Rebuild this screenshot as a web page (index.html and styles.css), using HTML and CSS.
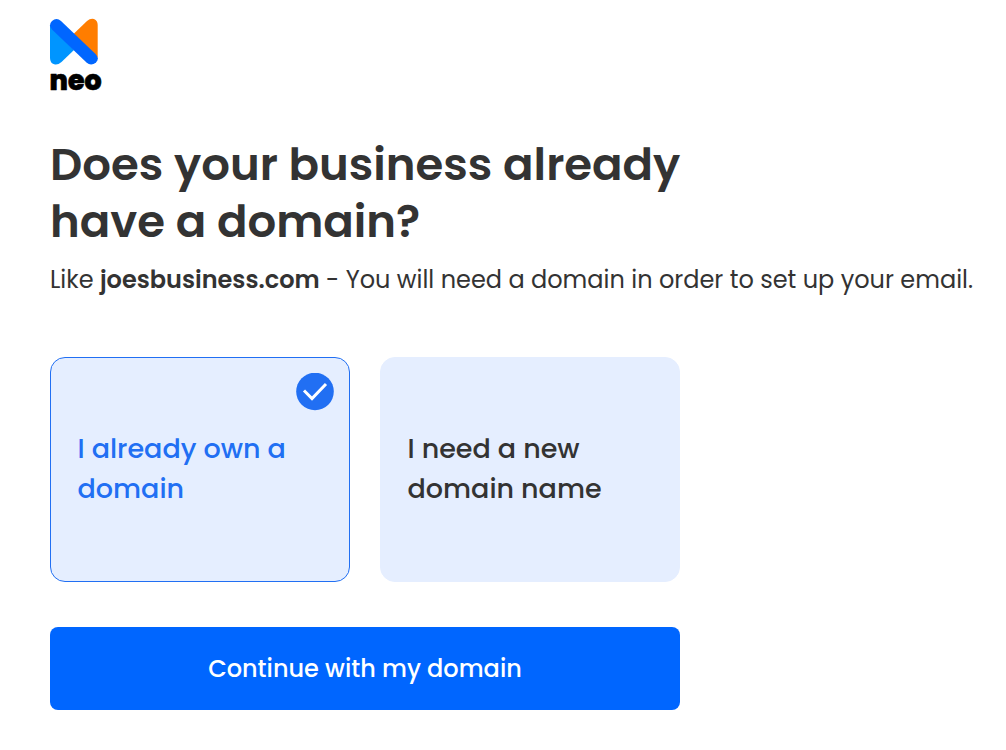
FILE: index.html
```html
<!DOCTYPE html>
<html lang="en">
<head>
    <meta charset="UTF-8">
    <meta name="viewport" content="width=device-width, initial-scale=1.0">
    <title>Neo - Set up your domain</title>
    <link rel="stylesheet" href="styles.css">
</head>
<body>
    <main class="page">
        <header>
            <svg class="logo" width="52" height="74" viewBox="0 0 52 74">
                <path d="M0 7 L24 32 L11.500 44 Q8 47 5 46.500 Q0 45.500 0 40 Z" fill="#0095ff"/>
                <path d="M23.500 16 L37 3 Q40.500 0 44 1 Q47.700 2.500 47.700 7 V40 Z" fill="#ff7d00"/>
                <path d="M2 3 Q6.500 -1 11 3 L45.500 36 Q50 40.500 46 44.500 Q41 48.500 36.500 44.500 L2 11.500 Q-2 7 2 3 Z" fill="#0066ff"/>
                <text class="logo-text" x="-0.500" y="72" textLength="52" lengthAdjust="spacingAndGlyphs">neo</text>
            </svg>
        </header>

        <h1>Does your business already<br>have a domain?</h1>
        <p class="subtitle">Like <strong>joesbusiness.com</strong> - You will need a domain in order to set up your email.</p>

        <div class="options">
            <div class="option selected">
                <svg class="check" width="38" height="38" viewBox="0 0 38 38">
                    <circle cx="19" cy="18.500" r="18.800" fill="#216ff3"/>
                    <path d="M8 17.500 L16 25.500 L30 11" fill="none" stroke="#fff" stroke-width="3"/>
                </svg>
                <span>I already own a<br>domain</span>
            </div>
            <div class="option">
                <span>I need a new<br>domain name</span>
            </div>
        </div>

        <button class="continue">Continue with my domain</button>
    </main>
</body>
</html>
```
FILE: styles.css
```css
:root {
    --neo-blue: #0066ff;
    --select-blue: #216ff3;
    --card-bg: #e5eeff;
    --text: #333333;
}

body {
    font-family: 'Poppins', 'Inter', sans-serif;
    margin: 0;
    background-color: #fff;
    color: var(--text);
}

.page {
    padding: 18px 0 0 50px;
}

header {
    height: 74px;
}

.logo {
    display: block;
    overflow: visible;
}

.logo-text {
    font-size: 28px;
    font-weight: 800;
    stroke: #000;
    stroke-width: 0.7;
    stroke-linejoin: round;
}

h1 {
    margin: 44px 0 0;
    font-size: 45px;
    font-weight: 600;
    line-height: 57px;
}

.subtitle {
    margin: 12px 0 0;
    font-size: 24px;
    font-weight: 400;
    line-height: 36px;
    white-space: nowrap;
}

.subtitle strong {
    font-weight: 600;
}

.options {
    display: flex;
    gap: 30px;
    margin-top: 59px;
}

.option {
    position: relative;
    box-sizing: border-box;
    width: 300px;
    height: 225px;
    padding: 71px 26.5px 0;
    border: 1px solid var(--card-bg);
    border-radius: 15px;
    background-color: var(--card-bg);
    font-size: 27px;
    font-weight: 500;
    line-height: 40px;
    white-space: nowrap;
}

.option.selected {
    border-color: var(--select-blue);
    color: var(--select-blue);
}

.check {
    position: absolute;
    top: 15px;
    right: 15px;
}

.continue {
    display: block;
    width: 630px;
    height: 83px;
    margin-top: 45px;
    border: none;
    border-radius: 8px;
    background-color: var(--neo-blue);
    color: #fff;
    font-family: inherit;
    font-size: 24px;
    font-weight: 500;
    cursor: pointer;
}
```
